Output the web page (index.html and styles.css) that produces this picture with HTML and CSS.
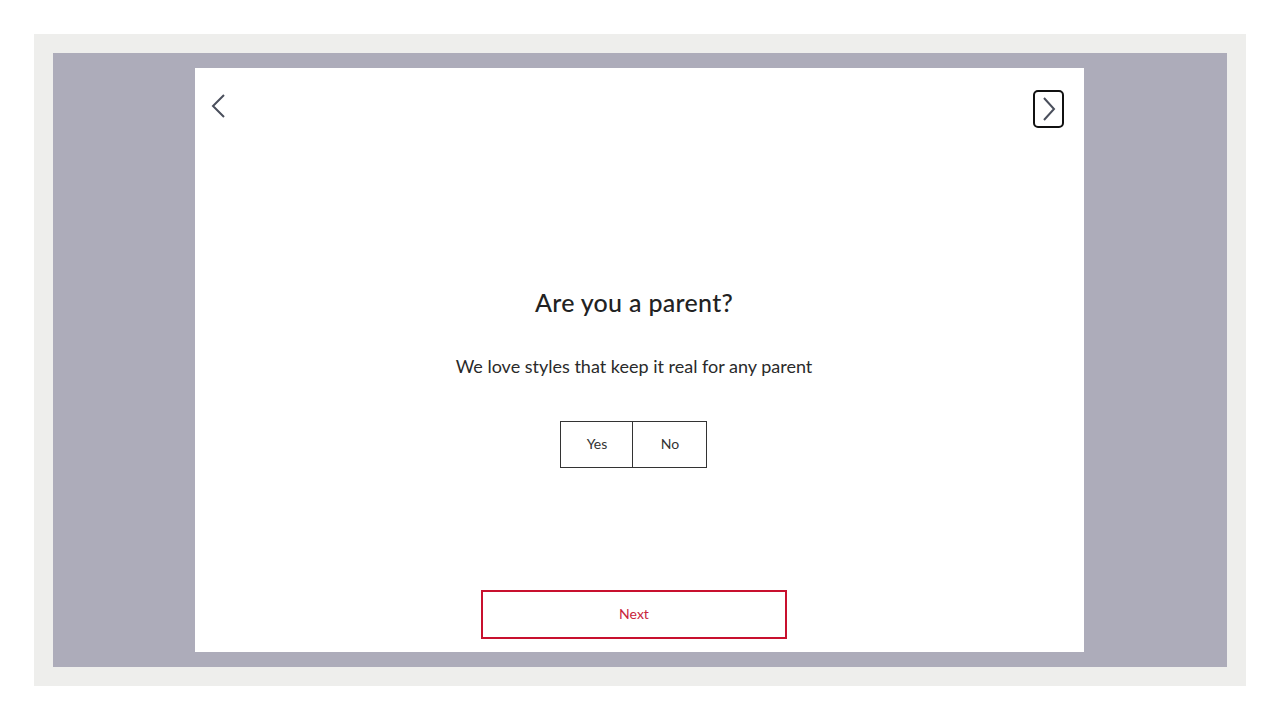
FILE: index.html
```html
<!DOCTYPE html>
<html lang="en">
<head>
    <meta charset="UTF-8">
    <meta name="viewport" content="width=device-width, initial-scale=1.0">
    <title>Style Quiz</title>
    <link rel="stylesheet" href="styles.css">
</head>
<body>
    <div class="frame">
        <div class="backdrop">
            <div class="card">
                <div class="card-header">
                    <button class="nav-back" aria-label="Back">
                        <svg width="16" height="24" viewBox="0 0 16 24">
                            <polyline points="13,1 2,12 13,23" fill="none" stroke="#4a4f5c" stroke-width="2"/>
                        </svg>
                    </button>
                    <button class="nav-forward" aria-label="Forward">
                        <svg width="14" height="24" viewBox="0 0 14 24">
                            <polyline points="2,1 12,12 2,23" fill="none" stroke="#4a4f5c" stroke-width="2"/>
                        </svg>
                    </button>
                </div>

                <div class="question">
                    <h2>Are you a parent?</h2>
                    <p>We love styles that keep it real for any parent</p>
                    <div class="choices">
                        <button class="choice">Yes</button>
                        <button class="choice">No</button>
                    </div>
                </div>

                <button class="next">Next</button>
            </div>
        </div>
    </div>
</body>
</html>
```

FILE: styles.css
```css
body {
    margin: 0;
    padding: 34px;
    background: #ffffff;
    font-family: Lato, "Open Sans", sans-serif;
}
.frame {
    width: 1212px;
    height: 652px;
    box-sizing: border-box;
    padding: 19px;
    background: #eeeeec;
}
.backdrop {
    height: 100%;
    box-sizing: border-box;
    padding: 15px 143px 15px 142px;
    background: #adacba;
}
.card {
    height: 100%;
    box-sizing: border-box;
    background: #ffffff;
    padding: 22px 20px 13px 17px;
    display: flex;
    flex-direction: column;
    align-items: center;
}
.card-header {
    align-self: stretch;
    display: flex;
    justify-content: space-between;
    align-items: flex-start;
    height: 38px;
}
.card-header button {
    border: none;
    background: none;
    padding: 0;
    cursor: pointer;
    display: flex;
    align-items: center;
    justify-content: center;
}
.nav-back {
    margin-top: 4px;
    margin-left: -1px;
    width: 16px;
    height: 24px;
}
.nav-forward {
    width: 31px;
    height: 38px;
    box-sizing: border-box;
    border: 2px solid #111111 !important;
    border-radius: 5px;
}
.question {
    margin-top: 159px;
    padding-right: 8px;
    text-align: center;
    flex: 1;
    display: flex;
    flex-direction: column;
    align-items: center;
}
.question h2 {
    margin: 0;
    font-size: 25px;
    line-height: 30px;
    font-weight: 500;
    color: #222222;
    letter-spacing: 0.3px;
}
.question p {
    margin: 38px 0 0;
    font-size: 18px;
    line-height: 22px;
    color: #2a2a2a;
}
.choices {
    display: flex;
    margin-top: 44px;
}
.choice {
    width: 73px;
    height: 47px;
    padding: 0 0 3px;
    border: 1px solid #333333;
    background: #ffffff;
    font-family: inherit;
    font-size: 14px;
    color: #333333;
    cursor: pointer;
}
.choice + .choice {
    width: 74px;
    border-left: none;
}
.next {
    width: 306px;
    height: 49px;
    margin-right: 8px;
    padding: 0 0 2px;
    border: 2px solid #c8102e;
    background: #ffffff;
    color: #c8243c;
    font-family: inherit;
    font-size: 14px;
    cursor: pointer;
}
```
